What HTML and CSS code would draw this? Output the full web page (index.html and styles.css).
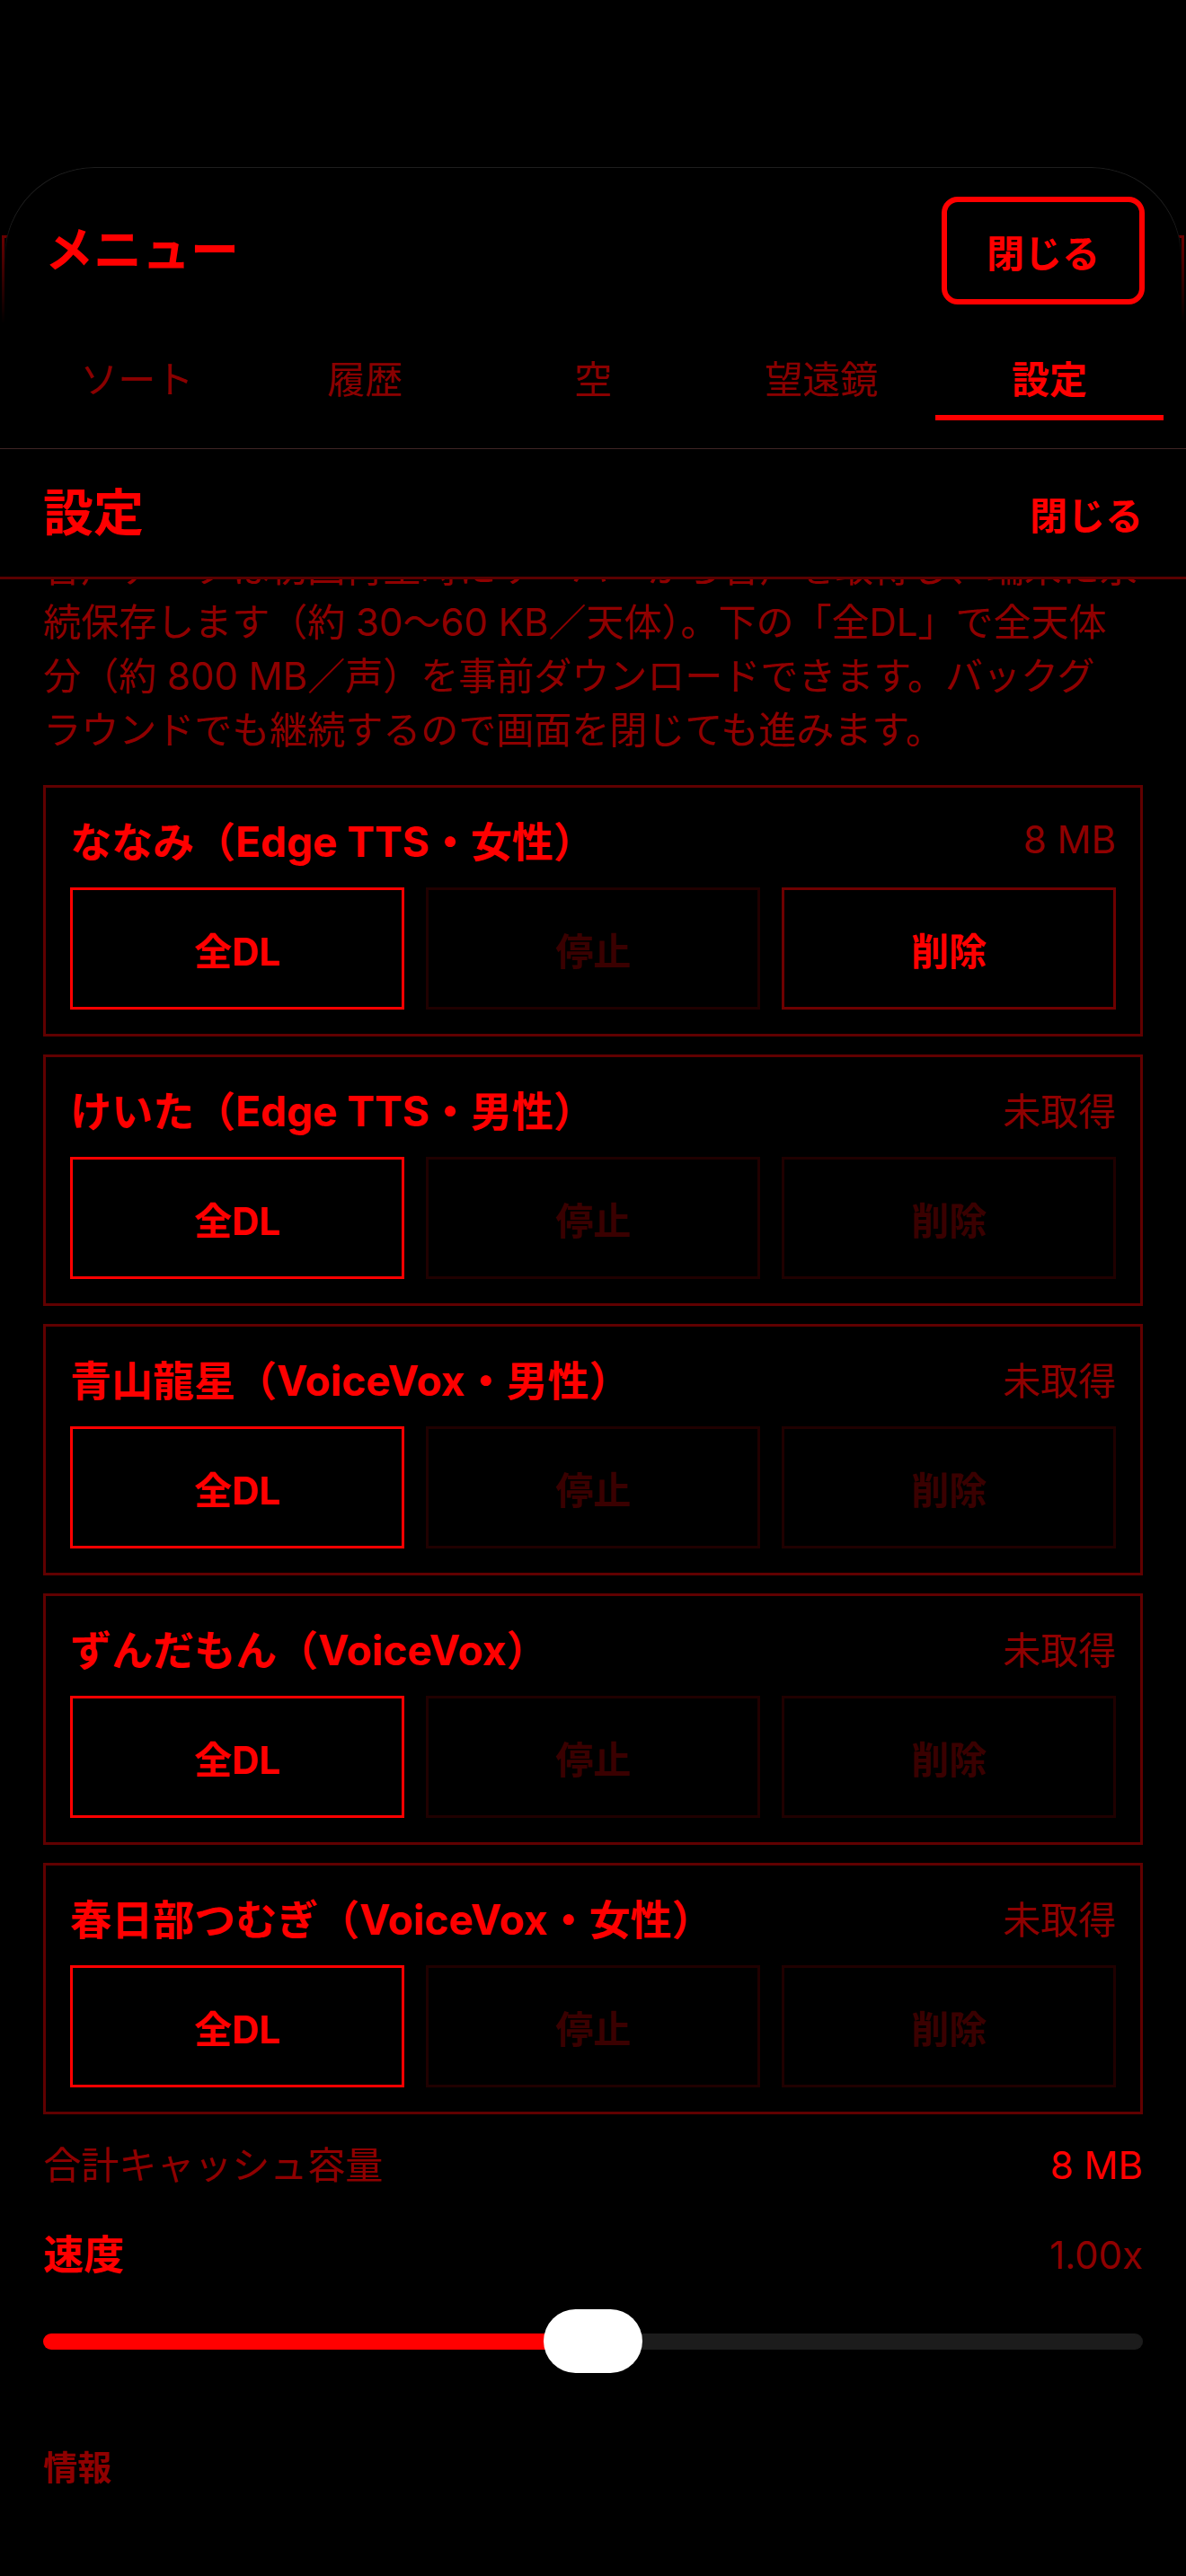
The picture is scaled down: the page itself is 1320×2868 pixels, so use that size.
FILE: index.html
```html
<html>
<head>
<title>メニュー - 設定</title>
<link rel="stylesheet" href="styles.css">
</head>
<body>
<div class="under"></div>

<div class="sheet">
  <div class="menu-head">
    <h1 class="menu-title">メニュー</h1>
    <button class="close-btn">閉じる</button>
  </div>
  <div class="tabs">
    <div class="tab">ソート</div>
    <div class="tab">履歴</div>
    <div class="tab">空</div>
    <div class="tab">望遠鏡</div>
    <div class="tab active">設定</div>
  </div>
</div>

<div class="settings">
  <div class="settings-head">
    <h2 class="settings-title">設定</h2>
    <span class="close-link">閉じる</span>
  </div>

  <div class="settings-body">
    <div class="settings-inner">
      <p class="note">
        音声データは初回再生時にサーバーから音声を取得し、端末に永<br>
        続保存します（約 30〜60 KB／天体）。下の「全DL」で全天体<br>
        分（約 800 MB／声）を事前ダウンロードできます。バックグ<br>
        ラウンドでも継続するので画面を閉じても進みます。
      </p>

      <div class="voices">
        <div class="voice">
          <div class="voice-top">
            <span class="voice-name">ななみ（Edge TTS・女性）</span>
            <span class="voice-size">8 MB</span>
          </div>
          <div class="voice-actions">
            <button class="act on">全DL</button>
            <button class="act" disabled>停止</button>
            <button class="act warn">削除</button>
          </div>
        </div>

        <div class="voice">
          <div class="voice-top">
            <span class="voice-name">けいた（Edge TTS・男性）</span>
            <span class="voice-size">未取得</span>
          </div>
          <div class="voice-actions">
            <button class="act on">全DL</button>
            <button class="act" disabled>停止</button>
            <button class="act" disabled>削除</button>
          </div>
        </div>

        <div class="voice">
          <div class="voice-top">
            <span class="voice-name">青山龍星（VoiceVox・男性）</span>
            <span class="voice-size">未取得</span>
          </div>
          <div class="voice-actions">
            <button class="act on">全DL</button>
            <button class="act" disabled>停止</button>
            <button class="act" disabled>削除</button>
          </div>
        </div>

        <div class="voice">
          <div class="voice-top">
            <span class="voice-name">ずんだもん（VoiceVox）</span>
            <span class="voice-size">未取得</span>
          </div>
          <div class="voice-actions">
            <button class="act on">全DL</button>
            <button class="act" disabled>停止</button>
            <button class="act" disabled>削除</button>
          </div>
        </div>

        <div class="voice">
          <div class="voice-top">
            <span class="voice-name">春日部つむぎ（VoiceVox・女性）</span>
            <span class="voice-size">未取得</span>
          </div>
          <div class="voice-actions">
            <button class="act on">全DL</button>
            <button class="act" disabled>停止</button>
            <button class="act" disabled>削除</button>
          </div>
        </div>
      </div>

      <div class="row total">
        <span>合計キャッシュ容量</span>
        <span class="total-val">8 MB</span>
      </div>

      <div class="row speed">
        <span class="speed-label">速度</span>
        <span>1.00x</span>
      </div>
      <input type="range" class="speed-range" min="0.5" max="1.5" step="0.05" value="1">

      <div class="section">情報</div>
    </div>
  </div>
</div>
</body>
</html>
```

FILE: styles.css
```css
  body {
    margin: 0;
    background-color: #000;
    color: #ff0000;
    font-family: Inter, "Noto Sans CJK JP", sans-serif;
  }

  /* edge of the page behind the sheet */
  .under {
    position: absolute;
    top: 262px;
    left: 2px;
    right: 2px;
    height: 95px;
    border: 3px solid #6a0000;
    border-bottom: none;
    -webkit-mask-image: linear-gradient(#000, transparent);
  }

  .sheet {
    position: relative;
    z-index: 1;
    margin: 186px 5px 0;
    padding-bottom: 31px;
    background-color: #000;
    border-radius: 100px 100px 0 0;
  }

  /* faint outline that fades out down the sides */
  .sheet::before {
    content: "";
    position: absolute;
    inset: 0;
    border: 1px solid #1e1e1e;
    border-bottom: none;
    border-radius: 100px 100px 0 0;
    -webkit-mask-image: linear-gradient(#000 60px, transparent 110px);
    pointer-events: none;
  }

  .menu-head {
    display: flex;
    justify-content: space-between;
    align-items: center;
    padding: 33px 41px 0 45px;
  }

  .menu-title {
    margin: 0;
    font-size: 54px;
    font-weight: 700;
    line-height: 1;
  }

  .close-btn {
    width: 226px;
    height: 120px;
    background: transparent;
    border: 6px solid #ff0000;
    border-radius: 18px;
    color: #ff0000;
    font-family: inherit;
    font-size: 42px;
    font-weight: 700;
  }

  .tabs {
    display: flex;
    margin-top: 54px;
    padding: 0 20px;
  }

  .tab {
    flex: 1;
    text-align: center;
    font-size: 42px;
    line-height: 60px;
    color: #8a0000;
    padding-bottom: 9px;
    border-bottom: 6px solid transparent;
  }

  .tab.active {
    color: #ff0000;
    font-weight: 700;
    border-bottom-color: #ff0000;
  }

  .settings {
    position: relative;
    z-index: 1;
    border-top: 1px solid #3f2424;
  }

  .settings-head {
    display: flex;
    justify-content: space-between;
    align-items: center;
    height: 142px;
    padding: 0 48px;
    border-bottom: 3px solid #5a0000;
  }

  .settings-title {
    margin: 0;
    font-size: 56px;
    font-weight: 700;
    line-height: 1;
  }

  .close-link {
    font-size: 42px;
    font-weight: 700;
  }

  .settings-body {
    overflow: hidden;
  }

  .settings-inner {
    padding: 0 48px;
  }

  .note {
    margin: -42px 0 31px;
    font-size: 42px;
    line-height: 60px;
    color: #8f0000;
  }

  .voices {
    display: flex;
    flex-direction: column;
    gap: 20px;
  }

  .voice {
    border: 3px solid #600000;
    padding: 27px;
  }

  .voice-top {
    display: flex;
    justify-content: space-between;
    align-items: center;
    height: 60px;
    margin-bottom: 24px;
  }

  .voice-name {
    font-size: 46px;
    font-weight: 700;
  }

  .voice-size {
    font-size: 42px;
    color: #8f0000;
  }

  .voice-actions {
    display: grid;
    grid-template-columns: repeat(3, 1fr);
    gap: 24px;
  }

  .act {
    height: 136px;
    background: transparent;
    border: 3px solid #200000;
    color: #3a0000;
    font-family: inherit;
    font-size: 42px;
    font-weight: 700;
  }

  .act.on {
    border-color: #ff0000;
    color: #ff0000;
  }

  .act.warn {
    border-color: #6e0000;
    color: #ff0000;
  }

  .row {
    display: flex;
    justify-content: space-between;
    align-items: center;
    font-size: 42px;
    line-height: 60px;
    color: #8f0000;
  }

  .total {
    margin-top: 27px;
  }

  .total-val {
    color: #ff0000;
  }

  .speed {
    margin-top: 40px;
  }

  .speed-label {
    font-size: 45px;
    font-weight: 700;
    color: #ff0000;
  }

  .speed-range {
    -webkit-appearance: none;
    appearance: none;
    display: block;
    width: 100%;
    height: 71px;
    margin: 30px 0 0;
    background: transparent;
  }

  .speed-range::-webkit-slider-runnable-track {
    height: 18px;
    border-radius: 9px;
    background: linear-gradient(to right, #ff0000 50%, #1c1c1c 50%);
  }

  .speed-range::-webkit-slider-thumb {
    -webkit-appearance: none;
    width: 110px;
    height: 71px;
    margin-top: -26.5px;
    border: none;
    border-radius: 36px;
    background: #fff;
  }

  .section {
    margin-top: 78px;
    font-size: 38px;
    font-weight: 700;
    line-height: 54px;
    color: #8f0000;
  }
```
